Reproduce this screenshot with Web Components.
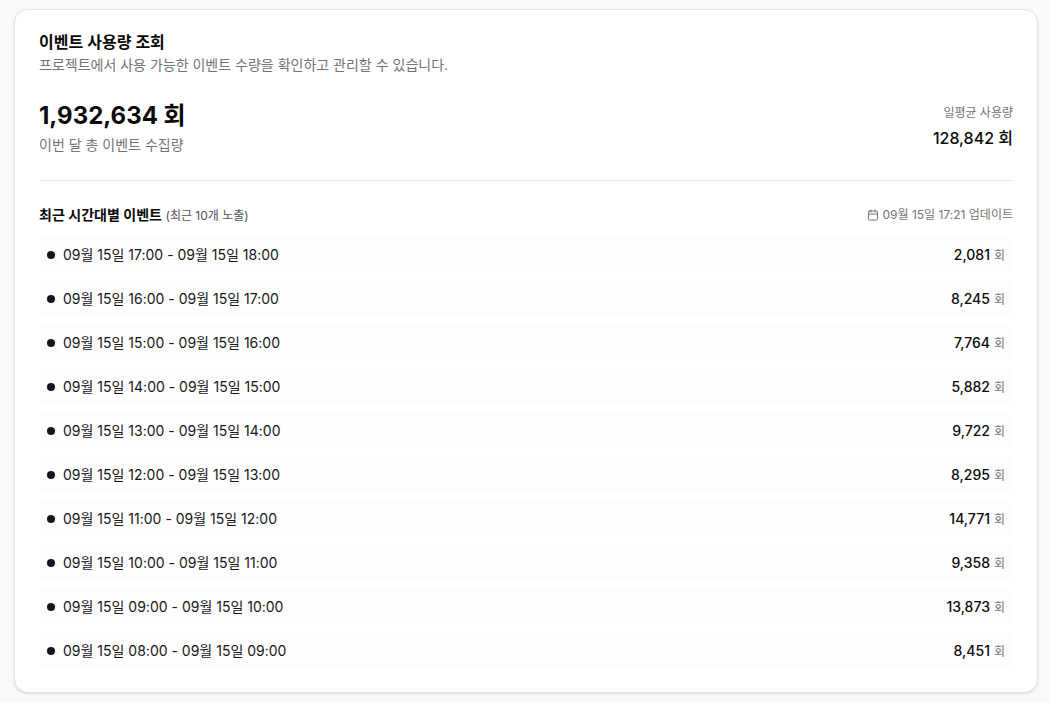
<!DOCTYPE html>
<html lang="ko">
<head>
<meta charset="utf-8">
<title>이벤트 사용량 조회</title>
<style>
  html, body { margin: 0; height: 702px; overflow: hidden; }
  body {
    background: #f8fafc;
    color: #0a0a0a;
    font-family: Inter, "Noto Sans CJK KR", sans-serif;
  }
</style>
</head>
<body>
<usage-card>
  <span slot="title">이벤트 사용량 조회</span>
  <span slot="desc">프로젝트에서 사용 가능한 이벤트 수량을 확인하고 관리할 수 있습니다.</span>
</usage-card>

<script>
const HOURS = [
  ['09월 15일 17:00 - 09월 15일 18:00', '2,081'],
  ['09월 15일 16:00 - 09월 15일 17:00', '8,245'],
  ['09월 15일 15:00 - 09월 15일 16:00', '7,764'],
  ['09월 15일 14:00 - 09월 15일 15:00', '5,882'],
  ['09월 15일 13:00 - 09월 15일 14:00', '9,722'],
  ['09월 15일 12:00 - 09월 15일 13:00', '8,295'],
  ['09월 15일 11:00 - 09월 15일 12:00', '14,771'],
  ['09월 15일 10:00 - 09월 15일 11:00', '9,358'],
  ['09월 15일 09:00 - 09월 15일 10:00', '13,873'],
  ['09월 15일 08:00 - 09월 15일 09:00', '8,451'],
];

class HourRow extends HTMLElement {
  constructor() {
    super();
    this.attachShadow({ mode: 'open' });
  }

  connectedCallback() {
    const range = this.getAttribute('range') || '';
    const count = this.getAttribute('count') || '0';
    this.shadowRoot.innerHTML = `
      <style>
        :host {
          display: flex;
          align-items: center;
          justify-content: space-between;
          height: 36px;
          padding: 0 8px;
          background: #fdfdfd;
          border-radius: 4px;
        }
        .left { display: flex; align-items: center; gap: 8px; font-size: 14px; line-height: 20px; color: #171717; }
        .dot { width: 8px; height: 8px; border-radius: 50%; background: #171717; }
        .right { display: flex; align-items: baseline; gap: 4px; }
        .count { font-size: 14px; line-height: 20px; font-weight: 500; }
        .unit { font-size: 12px; line-height: 16px; color: #737373; }
      </style>
      <div class="left"><span class="dot"></span><span>${range}</span></div>
      <div class="right"><span class="count">${count}</span><span class="unit">회</span></div>
    `;
  }
}

class UsageCard extends HTMLElement {
  constructor() {
    super();
    this.attachShadow({ mode: 'open' });
  }

  connectedCallback() {
    const rows = HOURS.map(h => `<hour-row range="${h[0]}" count="${h[1]}"></hour-row>`).join('');
    this.shadowRoot.innerHTML = `
      <style>
        :host {
          display: block;
          box-sizing: border-box;
          width: 1023.5px;
          height: 684px;
          margin: 9px 0 0 14px;
          padding: 22px 23.5px 0 24px;
          background: #fff;
          border: 1px solid #e5e5e5;
          border-radius: 14px;
          box-shadow: 0 1px 3px rgba(0, 0, 0, 0.1), 0 1px 2px -1px rgba(0, 0, 0, 0.1);
        }
        .title { font-size: 16px; line-height: 20px; font-weight: 600; }
        .desc { margin-top: 3px; font-size: 14px; line-height: 20px; color: #737373; }
        .summary { display: flex; justify-content: space-between; margin-top: 25px; padding-bottom: 25px; border-bottom: 1px solid #e5e5e5; }
        .total { font-size: 24px; line-height: 32px; font-weight: 700; }
        .total-label { margin-top: 3px; font-size: 14px; line-height: 20px; color: #737373; }
        .avg { padding-top: 5px; text-align: right; }
        .avg-label { font-size: 12px; line-height: 16px; color: #737373; }
        .avg-value { margin-top: 5px; font-size: 16px; line-height: 24px; font-weight: 500; }
        .list-head { display: flex; justify-content: space-between; align-items: center; height: 20px; margin-top: 24px; margin-bottom: 12px; }
        .list-title { font-size: 14px; line-height: 20px; font-weight: 600; }
        .list-title small { font-size: 12px; font-weight: 400; color: #525252; }
        .updated { display: flex; align-items: center; gap: 4px; font-size: 12px; line-height: 16px; color: #737373; }
        .updated svg { width: 12px; height: 12px; }
        .rows { display: flex; flex-direction: column; gap: 8px; }
      </style>
      <div class="title"><slot name="title"></slot></div>
      <div class="desc"><slot name="desc"></slot></div>
      <div class="summary">
        <div>
          <div class="total">1,932,634 회</div>
          <div class="total-label">이번 달 총 이벤트 수집량</div>
        </div>
        <div class="avg">
          <div class="avg-label">일평균 사용량</div>
          <div class="avg-value">128,842 회</div>
        </div>
      </div>
      <div class="list-head">
        <div class="list-title">최근 시간대별 이벤트 <small>(최근 10개 노출)</small></div>
        <div class="updated">
          <svg viewBox="0 0 24 24" fill="none" stroke="currentColor" stroke-width="2" stroke-linecap="round" stroke-linejoin="round"><path d="M8 2v4"/><path d="M16 2v4"/><rect x="3" y="4" width="18" height="18" rx="2"/><path d="M3 10h18"/></svg>
          <span>09월 15일 17:21 업데이트</span>
        </div>
      </div>
      <div class="rows">${rows}</div>
    `;
  }
}

customElements.define('hour-row', HourRow);
customElements.define('usage-card', UsageCard);
</script>
</body>
</html>
